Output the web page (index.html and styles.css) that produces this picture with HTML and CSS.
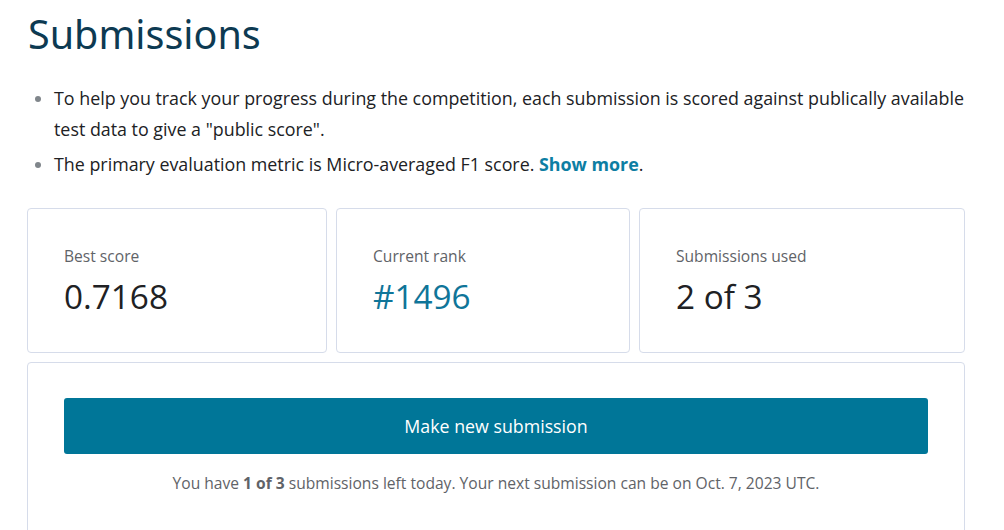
FILE: index.html
```html
<!DOCTYPE html>
<html lang="en">
<head>
<meta charset="utf-8">
<title>Submissions</title>
<link rel="stylesheet" href="styles.css">
</head>
<body>
<main class="page">
  <h1 class="title">Submissions</h1>
  <ul class="notes">
    <li>To help you track your progress during the competition, each submission is scored against publically available test data to give a "public score".</li>
    <li>The primary evaluation metric is Micro-averaged F1 score. <a class="more" href="#">Show more</a>.</li>
  </ul>
  <section class="stats">
    <div class="card stat">
      <div class="label">Best score</div>
      <div class="value">0.7168</div>
    </div>
    <div class="card stat">
      <div class="label">Current rank</div>
      <div class="value rank">#1496</div>
    </div>
    <div class="card stat">
      <div class="label">Submissions used</div>
      <div class="value">2 of 3</div>
    </div>
  </section>
  <section class="card submit">
    <button class="btn" type="button">Make new submission</button>
    <p class="left">You have <b>1 of 3</b> submissions left today. Your next submission can be on Oct. 7, 2023 UTC.</p>
  </section>
</main>
</body>
</html>
```

FILE: styles.css
```css
html, body {
  margin: 0;
  padding: 0;
  background: #ffffff;
}
body {
  font-family: "Open Sans", "Noto Sans", sans-serif;
  color: #202124;
}
.page {
  width: 938px;
  padding: 0 0 0 27px;
}
.title {
  margin: 0;
  padding: 10px 0 0 1px;
  font-family: "Noto Sans", "Open Sans", sans-serif;
  font-weight: 400;
  font-size: 39.5px;
  line-height: 48px;
  color: #0d3a52;
}
.notes {
  margin: 25px 0 0 0;
  padding: 0 0 0 27px;
  font-size: 17.85px;
  line-height: 31px;
  color: #202124;
}
.notes li {
  margin: 0 0 4px 0;
}
.notes li::marker {
  color: #80868b;
}
.more {
  color: #0d7ea3;
  font-weight: 700;
  text-decoration: none;
}
.stats {
  display: grid;
  grid-template-columns: 300px 294px 326px;
  gap: 9px;
  margin-top: 28px;
}
.card {
  border: 1px solid #d6dcea;
  border-radius: 4px;
  box-sizing: border-box;
}
.stat {
  height: 145px;
  padding: 35px 36px 0 36px;
}
.label {
  font-size: 15.6px;
  line-height: 24px;
  color: #5f6368;
}
.value {
  margin-top: 7px;
  font-size: 33.3px;
  line-height: 42px;
  color: #202124;
}
.value.rank {
  color: #0f7599;
}
.submit {
  margin-top: 9px;
  padding: 35px 36px 40px 36px;
  text-align: center;
}
.btn {
  display: block;
  width: 100%;
  height: 56px;
  border: 0;
  border-radius: 3px;
  background: #007698;
  color: #ffffff;
  font-family: "Open Sans", "Noto Sans", sans-serif;
  font-size: 17.8px;
}
.left {
  margin: 17px 0 0 0;
  font-size: 15.6px;
  line-height: 24px;
  color: #5f6368;
}
.left b {
  font-weight: 700;
}
```
